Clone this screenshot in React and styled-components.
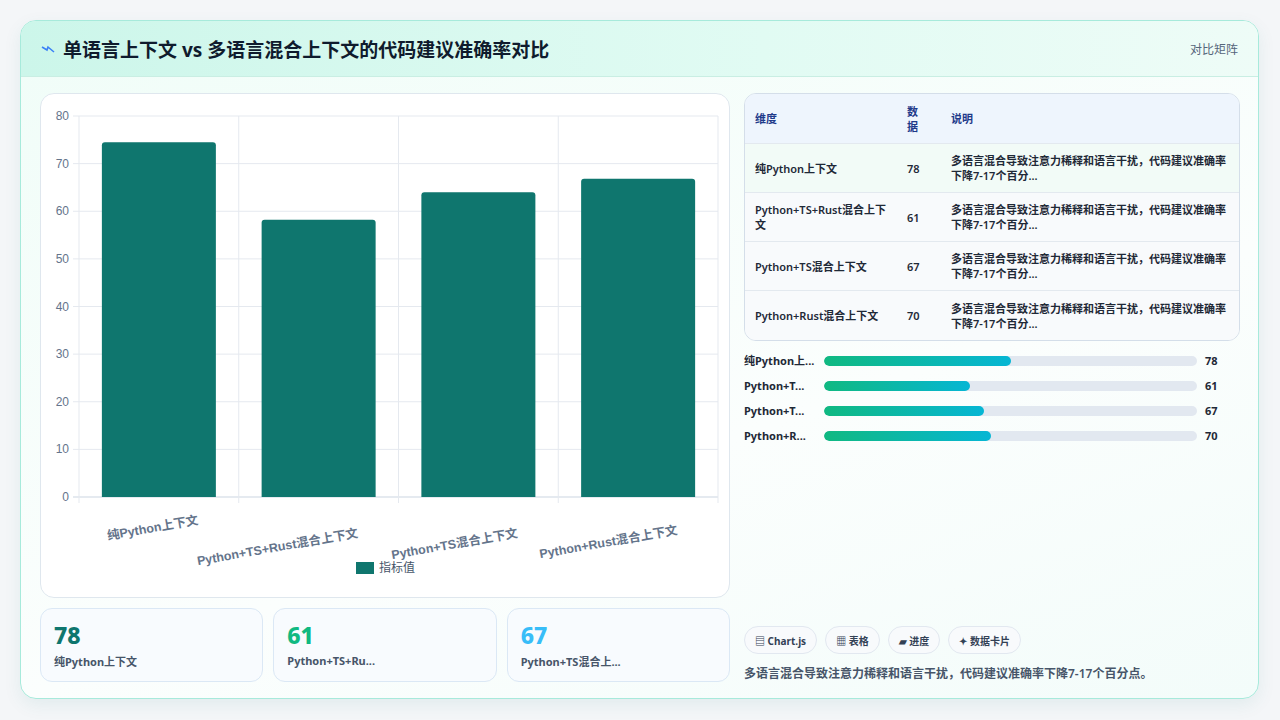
import React from 'react';
import styled, { createGlobalStyle } from 'styled-components';

const Global = createGlobalStyle`
  html, body { margin: 0; padding: 0; background: #f4f6f8; }
  body { font-family: "Noto Sans", "Noto Sans CJK SC", sans-serif; }
  * { box-sizing: border-box; }
`;

const Page = styled.div`
  width: 1280px;
  height: 720px;
  padding: 20px 21px 21px 20px;
`;

const Card = styled.div`
  height: 679px;
  border: 1px solid #a7eadb;
  border-radius: 16px;
  background: linear-gradient(160deg, #f0fdf8 0%, #fbfefd 60%, #f3fcfa 100%);
  box-shadow: 0 6px 18px rgba(15, 118, 110, 0.08);
  overflow: hidden;
  display: flex;
  flex-direction: column;
`;

const Header = styled.div`
  height: 56px;
  flex: none;
  display: flex;
  align-items: center;
  justify-content: space-between;
  padding: 0 20px;
  background: linear-gradient(90deg, #ccf6ea 0%, #e1fbf3 60%, #eefcf7 100%);
  border-bottom: 1px solid #c9eee3;
`;

const Title = styled.h1`
  margin: 0;
  font-size: 19px;
  font-weight: 700;
  color: #0f1b2d;
  display: flex;
  align-items: center;
  gap: 8px;
`;

const Tag = styled.span`
  font-size: 12px;
  color: #55657a;
`;

const Body = styled.div`
  flex: 1;
  display: grid;
  grid-template-columns: 690px 496px;
  gap: 14px;
  padding: 16px 18px 18px 19px;
`;

const Left = styled.div`
  display: flex;
  flex-direction: column;
  gap: 10px;
`;

const ChartPanel = styled.div`
  height: 505px;
  background: #fff;
  border: 1px solid #dfe7ee;
  border-radius: 14px;
  position: relative;
`;

const Stats = styled.div`
  display: grid;
  grid-template-columns: repeat(3, 1fr);
  gap: 10px;
`;

const Stat = styled.div`
  height: 74px;
  background: #f8fbfe;
  border: 1px solid #dbe8f5;
  border-radius: 12px;
  padding: 12px 13px;
`;

const StatNum = styled.div`
  font-size: 23px;
  font-weight: 800;
  line-height: 28px;
  color: ${p => p.color};
`;

const StatLabel = styled.div`
  font-size: 11px;
  font-weight: 700;
  color: #475569;
  margin-top: 4px;
`;

const Right = styled.div`
  display: flex;
  flex-direction: column;
`;

const Table = styled.div`
  border: 1px solid #d4dee9;
  border-radius: 12px;
  overflow: hidden;
  background: #fbfcfe;
`;

const Row = styled.div`
  display: grid;
  grid-template-columns: 156px 40px 1fr;
  align-items: center;
  height: ${p => (p.head ? 50 : 49)}px;
  background: ${p => (p.head ? '#eef5fd' : p.alt ? '#f2fbf7' : '#f8fafc')};
  border-bottom: ${p => (p.last ? 'none' : '1px solid #e3e9ef')};
  font-size: 11px;
  font-weight: ${p => (p.head ? 700 : 600)};
  color: ${p => (p.head ? '#1e3a8a' : '#1f2937')};
  line-height: 15px;
`;

const Cell = styled.div`
  padding: 0 10px;
`;

const NumCell = styled(Cell)`
  padding: 0 6px;
`;

const Bars = styled.div`
  display: flex;
  flex-direction: column;
  gap: 10px;
  margin-top: 12px;
`;

const BarRow = styled.div`
  display: grid;
  grid-template-columns: 80px 373px 1fr;
  align-items: center;
  font-size: 11px;
  font-weight: 700;
  color: #1f2937;
`;

const BarLabel = styled.div`
  line-height: 14px;
  white-space: ${p => (p.wrap ? 'normal' : 'nowrap')};
  overflow: hidden;
  text-overflow: ellipsis;
  padding-right: 4px;
`;

const Track = styled.div`
  height: 10px;
  border-radius: 5px;
  background: #e2e8f0;
  overflow: hidden;
`;

const Fill = styled.div`
  height: 100%;
  border-radius: 5px;
  background: linear-gradient(90deg, #10b981, #06b6d4);
`;

const BarValue = styled.div`
  padding-left: 8px;
`;

const Footer = styled.div`
  margin-top: auto;
`;

const Chips = styled.div`
  display: flex;
  gap: 8px;
`;

const Chip = styled.span`
  height: 28px;
  padding: 0 10px;
  border: 1px solid #e2e8f0;
  border-radius: 14px;
  background: #f8fafc;
  font-size: 10px;
  font-weight: 700;
  color: #334155;
  display: inline-flex;
  align-items: center;
  gap: 3px;
`;

const Note = styled.p`
  margin: 10px 0 0;
  font-size: 12px;
  font-weight: 600;
  color: #475569;
`;

const DESC = '多语言混合导致注意力稀释和语言干扰，代码建议准确率下降7-17个百分...';
const rows = [
  { name: '纯Python上下文', v: 78, bar: 74.5, short: '纯Python上...' },
  { name: 'Python+TS+Rust混合上下文', v: 61, bar: 58.2, short: 'Python+T...' },
  { name: 'Python+TS混合上下文', v: 67, bar: 64, short: 'Python+T...' },
  { name: 'Python+Rust混合上下文', v: 70, bar: 66.8, short: 'Python+R...' },
];

const Chart = () => {
  const x0 = 38, x1 = 677, top = 22, bottom = 403;
  const h = bottom - top;
  const cw = (x1 - x0) / 4;
  const labelY = [430, 443, 443, 440];
  return (
    <svg width="690" height="505" style={{ display: 'block' }}>
      {[0, 10, 20, 30, 40, 50, 60, 70, 80].map(t => {
        const y = bottom - (t / 80) * h;
        return (
          <g key={t}>
            <line x1={x0 - 6} x2={x1} y1={y} y2={y} stroke={t === 0 ? '#cbd5e1' : '#e5e9ef'} />
            <text x={x0 - 10} y={y + 4} fontSize="12" fill="#64748b" textAnchor="end" fontFamily="Liberation Sans, sans-serif">{t}</text>
          </g>
        );
      })}
      {[0, 1, 2, 3, 4].map(i => (
        <line key={i} x1={x0 + i * cw} x2={x0 + i * cw} y1={top} y2={bottom + 6} stroke="#e5e9ef" />
      ))}
      {rows.map((r, i) => {
        const bh = (r.bar / 80) * h;
        const cx = x0 + cw * i + cw / 2;
        return (
          <g key={r.name}>
            <path d={`M${cx - 57} ${bottom} V${bottom - bh + 3} Q${cx - 57} ${bottom - bh} ${cx - 54} ${bottom - bh} H${cx + 54} Q${cx + 57} ${bottom - bh} ${cx + 57} ${bottom - bh + 3} V${bottom}Z`} fill="#0f766e" />
            <text x={cx + 40} y={labelY[i]} fontSize="12.5" fontWeight="700" fill="#64748b" textAnchor="end" transform={`rotate(-10 ${cx + 40} ${labelY[i]})`} fontFamily="Liberation Sans, Noto Sans CJK SC, sans-serif">{r.name}</text>
          </g>
        );
      })}
      <rect x="315" y="468" width="18" height="12" fill="#0f766e" />
      <text x="338" y="478" fontSize="12" fill="#475569" fontFamily="Noto Sans CJK SC, sans-serif">指标值</text>
    </svg>
  );
};

export default function App() {
  return (
    <Page>
      <Global />
      <Card>
        <Header>
          <Title>
            <svg width="14" height="10" viewBox="0 0 14 10"><path d="M1 3 L6 6 L7 3 L13 8" stroke="#3b82f6" strokeWidth="1.6" fill="none" /></svg>
            单语言上下文 vs 多语言混合上下文的代码建议准确率对比
          </Title>
          <Tag>对比矩阵</Tag>
        </Header>
        <Body>
          <Left>
            <ChartPanel><Chart /></ChartPanel>
            <Stats>
              <Stat><StatNum color="#0f766e">78</StatNum><StatLabel>纯Python上下文</StatLabel></Stat>
              <Stat><StatNum color="#10b981">61</StatNum><StatLabel>Python+TS+Ru...</StatLabel></Stat>
              <Stat><StatNum color="#38bdf8">67</StatNum><StatLabel>Python+TS混合上...</StatLabel></Stat>
            </Stats>
          </Left>
          <Right>
            <Table>
              <Row head>
                <Cell>维度</Cell>
                <NumCell>数<br />据</NumCell>
                <Cell>说明</Cell>
              </Row>
              {rows.map((r, i) => (
                <Row key={r.name} alt={i === 0} last={i === rows.length - 1}>
                  <Cell>{r.name}</Cell>
                  <NumCell>{r.v}</NumCell>
                  <Cell>{DESC}</Cell>
                </Row>
              ))}
            </Table>
            <Bars>
              {rows.map((r, i) => (
                <BarRow key={r.name}>
                  <BarLabel wrap={i === 0}>{r.short}</BarLabel>
                  <Track><Fill style={{ width: `${(r.v / 156) * 100}%` }} /></Track>
                  <BarValue>{r.v}</BarValue>
                </BarRow>
              ))}
            </Bars>
            <Footer>
              <Chips>
                <Chip>▤ Chart.js</Chip>
                <Chip>▦ 表格</Chip>
                <Chip>▰ 进度</Chip>
                <Chip>✦ 数据卡片</Chip>
              </Chips>
              <Note>多语言混合导致注意力稀释和语言干扰，代码建议准确率下降7-17个百分点。</Note>
            </Footer>
          </Right>
        </Body>
      </Card>
    </Page>
  );
}
